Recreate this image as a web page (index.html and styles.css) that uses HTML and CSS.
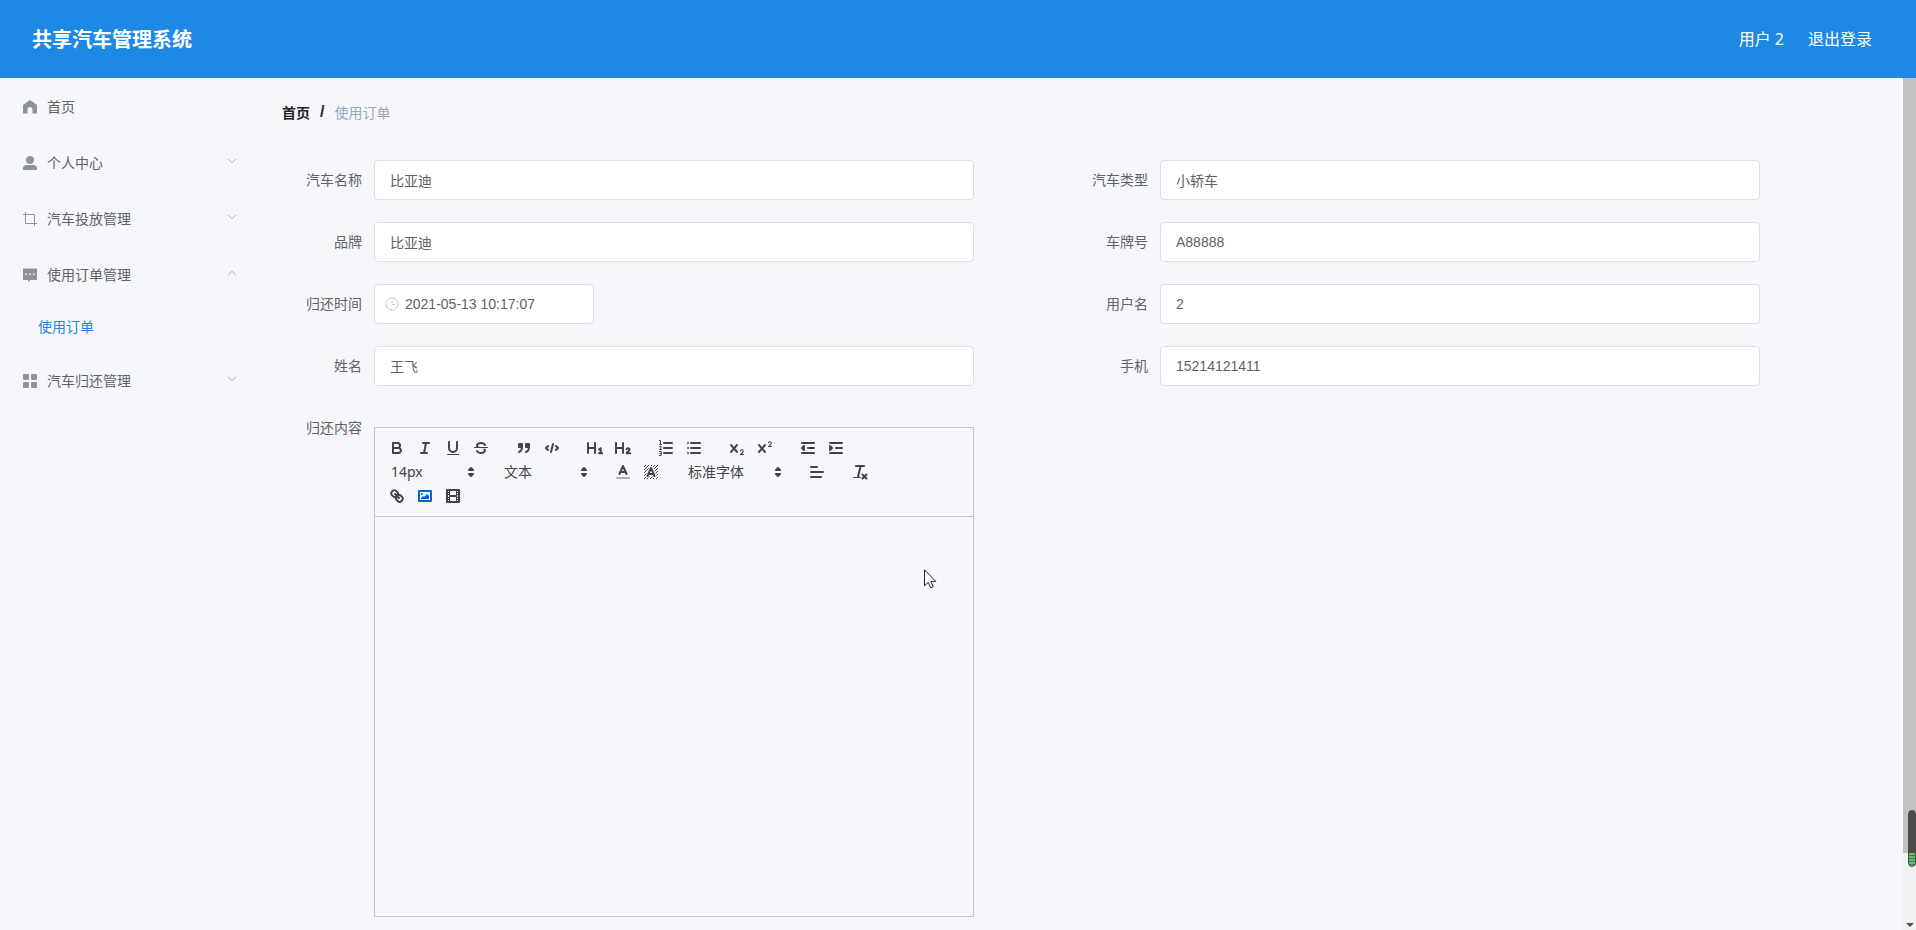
FILE: index.html
```html
<!DOCTYPE html>
<html lang="zh-CN">
<head>
<meta charset="utf-8">
<title>共享汽车管理系统</title>
<link rel="stylesheet" href="styles.css">
</head>
<body>
<div class="app">
  <header class="header">
    <h1 class="title">共享汽车管理系统</h1>
    <div class="account">
      <span>用户 2</span>
      <a class="logout" href="#">退出登录</a>
    </div>
  </header>
  <div class="body">
    <nav class="sidebar">
      <a class="item" href="#">
        <svg class="icon" viewBox="0 0 14 14"><path d="M7 0 14 5v8.500H9.500V9.500a2.500 2.500 0 0 0-5 0v4H0V5z"/></svg>
        <span>首页</span>
      </a>
      <button class="item" type="button">
        <svg class="icon" viewBox="0 0 14 14"><circle cx="7" cy="4" r="4"/><path d="M0 14v-1.500C0 10.500 1.500 9 3.500 9h7c2 0 3.500 1.500 3.500 3.500V14z"/></svg>
        <span>个人中心</span>
        <svg class="chevron" viewBox="0 0 10 6"><path d="M1 .8 5 4.800 9 .8"/></svg>
      </button>
      <button class="item" type="button">
        <svg class="icon line" viewBox="0 0 14 14"><path d="M2.500 0v11.500H14M0 2.500h11.500V14"/></svg>
        <span>汽车投放管理</span>
        <svg class="chevron" viewBox="0 0 10 6"><path d="M1 .8 5 4.800 9 .8"/></svg>
      </button>
      <button class="item" type="button">
        <svg class="icon" viewBox="0 0 14 14"><path fill-rule="evenodd" d="M0 .5h14v11.500H7.500L5 14v-2H0zM2.500 5.500v1.500H4V5.500zm3.700 0v1.500h1.600V5.500zm3.800 0v1.500h1.500V5.500z"/></svg>
        <span>使用订单管理</span>
        <svg class="chevron" viewBox="0 0 10 6"><path d="M1 5.200 5 1.200l4 4"/></svg>
      </button>
      <a class="subitem" href="#">使用订单</a>
      <button class="item" type="button">
        <svg class="icon" viewBox="0 0 14 14"><rect width="6" height="6" rx="1"/><rect x="8" width="6" height="6" rx="1"/><rect y="8" width="6" height="6" rx="1"/><rect x="8" y="8" width="6" height="6" rx="1"/></svg>
        <span>汽车归还管理</span>
        <svg class="chevron" viewBox="0 0 10 6"><path d="M1 .8 5 4.800 9 .8"/></svg>
      </button>
    </nav>
    <main class="main">
      <div class="breadcrumb">
        <a class="home" href="#">首页</a><span class="sep">/</span><span class="current">使用订单</span>
      </div>
      <form class="form">
        <div class="field"><label for="name">汽车名称</label><input class="input" id="name" type="text" value="比亚迪"></div>
        <div class="field"><label for="type">汽车类型</label><input class="input" id="type" type="text" value="小轿车"></div>
        <div class="field"><label for="brand">品牌</label><input class="input" id="brand" type="text" value="比亚迪"></div>
        <div class="field"><label for="plate">车牌号</label><input class="input" id="plate" type="text" value="A88888"></div>
        <div class="field"><label for="time">归还时间</label>
          <div class="date">
            <svg class="clock" viewBox="0 0 14 14"><circle cx="7" cy="7" r="6"/><path d="M7 3.500V7.500h3"/></svg>
            <input class="date-input" id="time" type="text" value="2021-05-13 10:17:07">
          </div>
        </div>
        <div class="field"><label for="user">用户名</label><input class="input" id="user" type="text" value="2"></div>
        <div class="field"><label for="person">姓名</label><input class="input" id="person" type="text" value="王飞"></div>
        <div class="field"><label for="phone">手机</label><input class="input" id="phone" type="text" value="15214121411"></div>
        <div class="field"><label for="content">归还内容</label>
          <div class="editor">
            <div class="toolbar">
              <div class="group">
                <button type="button" class="tool" aria-label="粗体"><svg viewBox="0 0 18 18"><path class="s" d="M5 4h4.500A2.500 2.500 0 0 1 12 6.500 2.500 2.500 0 0 1 9.500 9H5zM5 9h5.500A2.500 2.500 0 0 1 13 11.500 2.500 2.500 0 0 1 10.500 14H5z"/></svg></button>
                <button type="button" class="tool" aria-label="斜体"><svg viewBox="0 0 18 18"><path class="s" d="M7 4h6M5 14h6M8 14l2-10"/></svg></button>
                <button type="button" class="tool" aria-label="下划线"><svg viewBox="0 0 18 18"><path class="s" d="M5 3v6a4.012 4.012 0 0 0 4 4 4.012 4.012 0 0 0 4-4V3"/><rect class="f" x="3" y="15" width="12" height="1" rx=".5"/></svg></button>
                <button type="button" class="tool" aria-label="删除线"><svg viewBox="0 0 18 18"><path class="s thin" d="M15.500 8.500h-13"/><path class="f" d="M9.007 8C6.542 7.791 6 7.519 6 6.500 6 5.792 7.283 5 9 5c1.571 0 2.765.679 2.969 1.309a1 1 0 0 0 1.900-.617C13.356 4.106 11.354 3 9 3 6.200 3 4 4.538 4 6.500a3.200 3.200 0 0 0 .5 1.843zM8.984 10C11.457 10.208 12 10.479 12 11.500c0 .708-1.283 1.500-3 1.500-1.571 0-2.765-.679-2.969-1.309a1 1 0 1 0-1.900.617C4.644 13.894 6.646 15 9 15c2.800 0 5-1.538 5-3.500a3.200 3.200 0 0 0-.5-1.843z"/></svg></button>
              </div>
              <div class="group">
                <button type="button" class="tool" aria-label="引用"><svg viewBox="0 0 18 18"><path class="f s" d="M4 5h3v3H4zM11 5h3v3h-3z"/><path class="s" d="M7 8c0 4.031-3 5-3 5M14 8c0 4.031-3 5-3 5"/></svg></button>
                <button type="button" class="tool" aria-label="代码"><svg viewBox="0 0 18 18"><path class="s" d="M5 7 3 9l2 2M13 7l2 2-2 2M10 5 8 13"/></svg></button>
              </div>
              <div class="group">
                <button type="button" class="tool" aria-label="标题 1"><svg viewBox="0 0 18 18"><path class="s" d="M2 4v10M9 4v10M2 9h7M13 10.500l1.700-1.300v5M13 14.200h3.200"/></svg></button>
                <button type="button" class="tool" aria-label="标题 2"><svg viewBox="0 0 18 18"><path class="s" d="M2 4v10M9 4v10M2 9h7M12.500 10.200c.5-1.500 3.200-1.300 3.100.3 0 1.300-2.600 2-3 3.700h3.600"/></svg></button>
              </div>
              <div class="group">
                <button type="button" class="tool" aria-label="有序列表"><svg viewBox="0 0 18 18"><path class="s" d="M7 4h8M7 9h8M7 14h8"/><path class="s thin" d="M2.500 1.500 3.500 1.500V5.500M2.500 5.500h2M2.500 7.500h1.500v1.500L2.500 10.500h2M2.500 12.500h1.700v4H2.500M3 14.500h1.200"/></svg></button>
                <button type="button" class="tool" aria-label="无序列表"><svg viewBox="0 0 18 18"><path class="s" d="M6 4h9M6 9h9M6 14h9M3 4v0M3 9v0M3 14v0"/></svg></button>
              </div>
              <div class="group">
                <button type="button" class="tool" aria-label="下标"><svg viewBox="0 0 18 18"><path class="f" d="M15.500 15H13.861a3.858 3.858 0 0 0 1.914-2.975 1.800 1.800 0 0 0-1.600-1.751A1.921 1.921 0 0 0 12.021 11.700a.501.501 0 1 0 .957.291.914.914 0 0 1 1.053-.725.810.810 0 0 1 .744.762c0 1.077-1.172 1.870-1.938 2.162A1.500 1.500 0 0 0 12 15.500a.5.500 0 0 0 .5.500h3a.5.500 0 0 0 0-1zM9.650 5.241a1 1 0 0 0-1.409.108L6 7.964 3.759 5.349A1 1 0 0 0 2.192 6.590L4.684 9.500 2.241 12.350a1 1 0 0 0 1.518 1.300L6 11.036l2.241 2.614a1 1 0 0 0 1.518-1.300L7.317 9.500l2.442-2.849a1 1 0 0 0-.109-1.410z"/></svg></button>
                <button type="button" class="tool" aria-label="上标"><svg viewBox="0 0 18 18"><path class="f" d="M15.500 7H13.861a4.015 4.015 0 0 0 1.914-2.975 1.800 1.800 0 0 0-1.600-1.751A1.922 1.922 0 0 0 12.021 3.700a.5.500 0 1 0 .957.291.917.917 0 0 1 1.053-.725.810.810 0 0 1 .744.762c0 1.077-1.164 1.925-1.934 2.486A1.423 1.423 0 0 0 12 7.500a.5.500 0 0 0 .5.500h3a.5.500 0 0 0 0-1zM9.651 5.241a1 1 0 0 0-1.410.108L6 7.964 3.759 5.349a1 1 0 1 0-1.519 1.300L4.683 9.500 2.241 12.350a1 1 0 1 0 1.519 1.300L6 11.036l2.241 2.614a1 1 0 0 0 1.519-1.300L7.317 9.500l2.442-2.849a1 1 0 0 0-.108-1.410z"/></svg></button>
              </div>
              <div class="group">
                <button type="button" class="tool" aria-label="减少缩进"><svg viewBox="0 0 18 18"><path class="s" d="M3 14h12M3 4h12M9 9h6"/><path class="f s" d="M5 7v4L3 9z"/></svg></button>
                <button type="button" class="tool" aria-label="增加缩进"><svg viewBox="0 0 18 18"><path class="s" d="M3 14h12M3 4h12M9 9h6"/><path class="f s" d="M3 7v4l2-2z"/></svg></button>
              </div>
              <div class="group picker">
                <select class="select" aria-label="字号"><option>14px</option></select>
                <svg class="updown" viewBox="0 0 18 18"><path class="f s" d="m7 11 2 2 2-2zM7 7l2-2 2 2z"/></svg>
              </div>
              <div class="group picker">
                <select class="select" aria-label="段落"><option>文本</option></select>
                <svg class="updown" viewBox="0 0 18 18"><path class="f s" d="m7 11 2 2 2-2zM7 7l2-2 2 2z"/></svg>
              </div>
              <div class="group">
                <button type="button" class="tool" aria-label="文字颜色"><svg viewBox="0 0 18 18"><path class="s pale" d="M3 15h12"/><path class="s" d="M5.500 11 9 3l3.500 8M11.630 9H6.380"/></svg></button>
                <button type="button" class="tool" aria-label="背景颜色"><svg viewBox="0 0 18 18"><path class="s hatch" d="M2 4l2-2M2 7l5-5M2 10l8-8M2 13l11-11M2 16l14-14M5 16l11-11M8 16l8-8M11 16l5-5M14 16l2-2"/><path class="s halo" d="M5.500 13 9 5l3.500 8M11.630 11H6.380"/><path class="s" d="M5.500 13 9 5l3.500 8M11.630 11H6.380"/></svg></button>
              </div>
              <div class="group picker wide">
                <select class="select" aria-label="字体"><option>标准字体</option></select>
                <svg class="updown" viewBox="0 0 18 18"><path class="f s" d="m7 11 2 2 2-2zM7 7l2-2 2 2z"/></svg>
              </div>
              <div class="group">
                <button type="button" class="tool" aria-label="对齐"><svg viewBox="0 0 18 18"><path class="s" d="M3 9h12M3 14h10M3 4h6"/></svg></button>
              </div>
              <div class="group">
                <button type="button" class="tool" aria-label="清除格式"><svg viewBox="0 0 18 18"><path class="s" d="M5 3h8M9.600 3 7 14M11.500 11.500l4 4M15.500 11.500l-4 4"/><rect class="f" x="2" y="14" width="8" height="1" rx=".5"/></svg></button>
              </div>
              <div class="group">
                <button type="button" class="tool" aria-label="链接"><svg viewBox="0 0 18 18"><path class="s" d="M7 7l4 4M8.900 4.577a3.476 3.476 0 0 1 .36 4.679 3.476 3.476 0 0 1-4.679-.36C3.185 7.500 2.035 6.400 4.217 4.217S7.500 3.185 8.900 4.577zM13.423 9.100a3.476 3.476 0 0 0-4.679-.36 3.476 3.476 0 0 0 .36 4.679c1.392 1.392 2.500 2.542 4.679.36s1.032-3.283-.36-4.679z"/></svg></button>
                <button type="button" class="tool active" aria-label="图片"><svg viewBox="0 0 18 18"><rect class="s" x="3" y="4" width="12" height="10"/><circle class="f" cx="6" cy="7" r="1"/><path class="f" d="M5 12h8v-3l-2-2-3 3-1-1-2 2z"/></svg></button>
                <button type="button" class="tool" aria-label="视频"><svg viewBox="0 0 18 18"><rect class="s" x="3" y="3" width="12" height="12"/><path class="f" d="M5 3h1v12H5zM12 3h1v12h-1zM5 8h8v2H5zM3 5h3v1H3zM3 7h3v1H3zM3 10h3v1H3zM3 12h3v1H3zM12 5h3v1h-3zM12 7h3v1h-3zM12 10h3v1h-3zM12 12h3v1h-3z"/></svg></button>
              </div>
            </div>
            <textarea class="content" id="content"></textarea>
          </div>
        </div>
      </form>
    </main>
    <div class="scrollbar" aria-hidden="true">
      <div class="thumb"></div>
      <svg class="down" viewBox="0 0 8 4"><path d="M0 0h8L4 4z"/></svg>
    </div>
  </div>
  <div class="meter" aria-hidden="true"></div>
  <svg class="cursor" viewBox="0 0 13 20" aria-hidden="true"><path d="M.5.8v16l3.700-3.500 2.500 5.500 2.500-1.100-2.400-5.300h5z"/></svg>
</div>
</body>
</html>
```

FILE: styles.css
```css
* { box-sizing: border-box; }

body {
  margin: 0;
  background: #f5f7fb;
  color: #606266;
  font-family: "Liberation Sans", "Noto Sans CJK SC", sans-serif;
  font-size: 14px;
}

a { color: inherit; text-decoration: none; }
button, input, select, textarea { font: inherit; color: inherit; }

.app {
  position: relative;
  display: flex;
  flex-direction: column;
  height: 100vh;
  overflow: hidden;
}

.header {
  flex: none;
  display: flex;
  align-items: center;
  justify-content: space-between;
  height: 78px;
  padding: 0 44px 2px 32px;
  background: #1e88e5;
  color: #fff;
  font-family: "Noto Sans", "Noto Sans CJK SC", sans-serif;
}

.title { margin: 0; font-size: 20px; font-weight: 700; }
.account { display: flex; gap: 24px; font-size: 16px; }

.body { flex: 1; display: flex; min-height: 0; }

.sidebar { flex: none; width: 262px; }

.item {
  display: flex;
  align-items: center;
  gap: 10px;
  width: 100%;
  height: 56px;
  padding: 0 25px 0 23px;
  border: 0;
  background: none;
  text-align: left;
}

.icon { flex: none; width: 14px; height: 14px; margin-top: 2px; fill: #909399; }
.icon.line { fill: none; stroke: #909399; }
.chevron {
  width: 10px;
  height: 6px;
  margin: 0 0 2px auto;
  fill: none;
  stroke: #a9acb2;
}

.subitem {
  display: flex;
  align-items: center;
  height: 50px;
  padding: 0 0 2px 38px;
  color: #2c82dc;
}

.main { flex: 1; min-width: 0; padding: 23px 20px 0; }

.breadcrumb {
  display: flex;
  align-items: center;
  gap: 10px;
  height: 22px;
}
.home, .sep { color: #222528; font-weight: 700; }
.sep { font-size: 16px; }
.current { color: #97a8be; }

.form {
  display: grid;
  grid-template-columns: 1fr 1fr;
  row-gap: 22px;
  padding: 37px 17px 0 12px;
}

.field { display: grid; grid-template-columns: 80px 1fr; align-items: start; }
.field label { padding-right: 12px; line-height: 40px; text-align: right; }

.input, .date {
  width: 85%;
  height: 40px;
  padding: 0 15px;
  border: 1px solid #dcdfe6;
  border-radius: 4px;
  background: #fff;
}

.date {
  display: flex;
  align-items: center;
  gap: 6px;
  width: 220px;
  padding: 0 10px;
}
.clock { flex: none; width: 14px; height: 14px; fill: none; stroke: #c0c4cc; }
.date-input { min-width: 0; width: 100%; padding: 0; border: 0; background: none; }

.editor { width: 85%; margin-top: 19px; border: 1px solid #c4c6cb; }

.toolbar {
  display: flex;
  flex-wrap: wrap;
  padding: 8px;
  border-bottom: 1px solid #c4c6cb;
  font-family: "Noto Sans", "Noto Sans CJK SC", sans-serif;
}

.group { display: flex; height: 24px; margin-right: 15px; }

.tool {
  width: 28px;
  height: 24px;
  padding: 3px 5px;
  border: 0;
  background: none;
  color: #444;
}
.tool svg { display: block; width: 18px; height: 18px; }
.tool.active { color: #06c; }

.s {
  fill: none;
  stroke: currentColor;
  stroke-width: 2;
  stroke-linecap: round;
  stroke-linejoin: round;
}
.s.f, .f { fill: currentColor; }
.thin { stroke-width: 1; }
.pale { stroke: #a9abae; }
.hatch { stroke-width: 1; stroke-linecap: butt; }
.halo { stroke: #f5f7fb; stroke-width: 4; }

.picker { position: relative; width: 98px; color: #444; }
.picker.wide { width: 108px; }
.select {
  width: 100%;
  height: 24px;
  padding: 0 20px 2px 8px;
  border: 0;
  background: none;
  appearance: none;
}
.updown {
  position: absolute;
  top: 3px;
  right: 1px;
  width: 18px;
  height: 18px;
  pointer-events: none;
}

.content {
  display: block;
  width: 100%;
  height: 399px;
  padding: 12px 15px;
  border: 0;
  background: none;
  resize: none;
}

.scrollbar {
  flex: none;
  display: flex;
  flex-direction: column;
  justify-content: space-between;
  width: 13px;
  background: #f1f1f1;
}
.thumb { height: 91%; background: #c1c1c1; }
.down { width: 8px; height: 4px; margin: 0 3px 3px; fill: #505050; }

.meter {
  position: absolute;
  right: 0;
  bottom: 63px;
  width: 8px;
  height: 57px;
  border: 1px solid #4a4a4a;
  border-radius: 4px;
  background: linear-gradient(#4a4a4a 42px, transparent 42px), repeating-linear-gradient(#5fbf72 0 2px, #3f7a4b 2px 3px);
}

.cursor {
  position: absolute;
  left: 924px;
  top: 569px;
  width: 13px;
  height: 20px;
  fill: #fff;
  stroke: #222;
}
```
